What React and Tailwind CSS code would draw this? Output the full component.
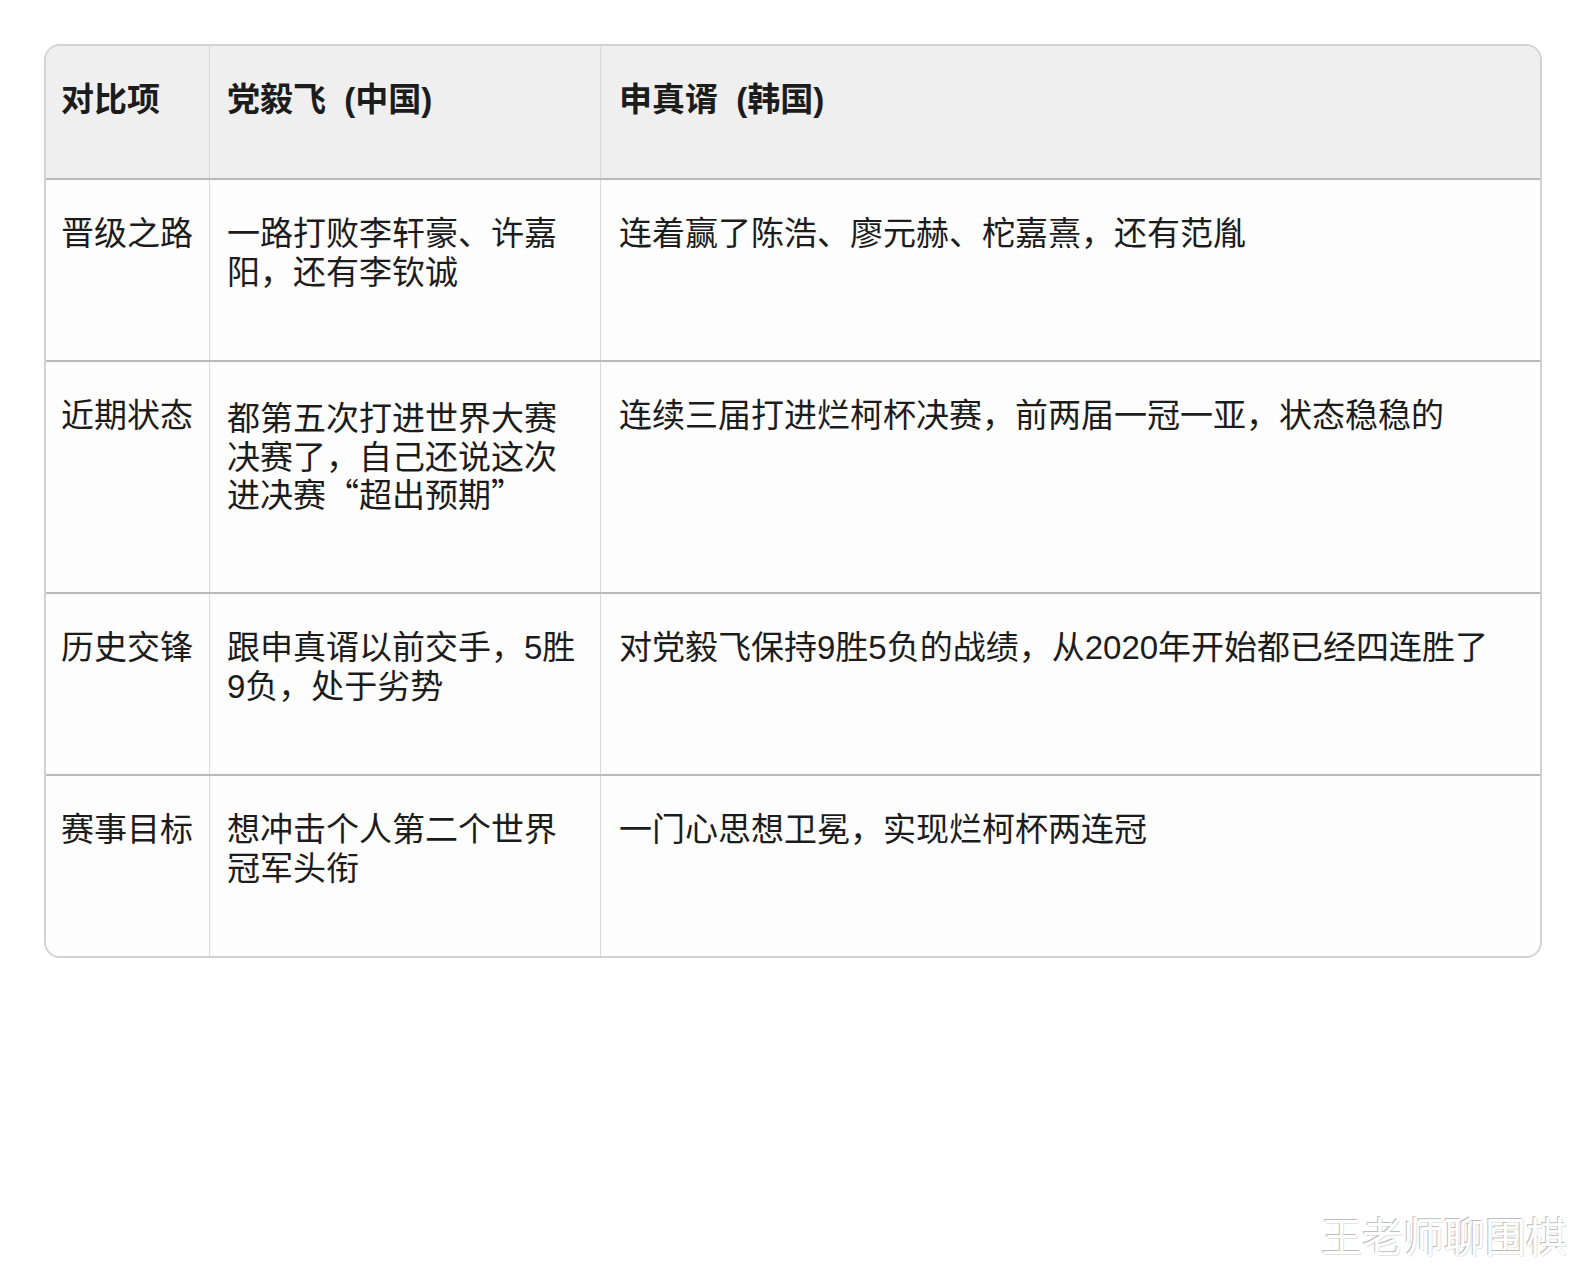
import React from "react";

const rows = [
  {
    item: "晋级之路",
    dang: "一路打败李轩豪、许嘉阳，还有李钦诚",
    shin: "连着赢了陈浩、廖元赫、柁嘉熹，还有范胤",
    h: "h-[182px]",
  },
  {
    item: "近期状态",
    dang: "都第五次打进世界大赛决赛了，自己还说这次进决赛“超出预期”",
    shin: "连续三届打进烂柯杯决赛，前两届一冠一亚，状态稳稳的",
    h: "h-[232px]",
    cjkOnly: true,
  },
  {
    item: "历史交锋",
    dang: "跟申真谞以前交手，5胜9负，处于劣势",
    shin: "对党毅飞保持9胜5负的战绩，从2020年开始都已经四连胜了",
    h: "h-[182px]",
  },
  {
    item: "赛事目标",
    dang: "想冲击个人第二个世界冠军头衔",
    shin: "一门心思想卫冕，实现烂柯杯两连冠",
    h: "h-[182px]",
  },
];

export default function App() {
  return (
    <div className="relative h-[1279px] w-full bg-white font-['Liberation_Sans','Noto_Sans_CJK_SC',sans-serif] text-[#1c1c1c]">
      <div className="pl-[44px] pr-[45px] pt-[44px]">
        {/* comparison table */}
        <div className="overflow-hidden rounded-[16px] border-2 border-[#d2d2d2]">
          <div className="grid h-[132px] grid-cols-[163px_391px_1fr] bg-[#efefef] text-[33px] font-bold leading-[38px]">
            <div className="pl-[15px] pt-[35px]">对比项</div>
            <div className="border-l border-[#d8d8d8] pl-[17px] pt-[35px]">党毅飞&nbsp; (中国)</div>
            <div className="border-l border-[#d8d8d8] pl-[18px] pt-[35px]">申真谞&nbsp; (韩国)</div>
          </div>

          {rows.map((row) => (
            <div
              key={row.item}
              className={`grid grid-cols-[163px_391px_1fr] border-t-2 border-[#b9b9b9] bg-[#fdfdfd] text-[33px] leading-[38.5px] ${row.h}`}
            >
              <div className="pl-[15px] pt-[35px]">{row.item}</div>
              <div
                className={`border-l border-[#d8d8d8] pl-[17px] pr-[18px] pt-[35px] ${
                  row.cjkOnly ? "font-['Noto_Sans_CJK_SC',sans-serif]" : ""
                }`}
              >
                {row.dang}
              </div>
              <div className="border-l border-[#d8d8d8] pl-[18px] pr-[18px] pt-[35px]">{row.shin}</div>
            </div>
          ))}
        </div>
      </div>

      {/* watermark */}
      <div className="absolute right-[20px] top-[1210px] text-[41px] leading-[48px] text-white [text-shadow:-1px_-1px_0_#bdbdbd,1px_1px_0_#e4e4e4] font-['Noto_Sans_CJK_SC',sans-serif]">
        王老师聊围棋
      </div>
    </div>
  );
}
